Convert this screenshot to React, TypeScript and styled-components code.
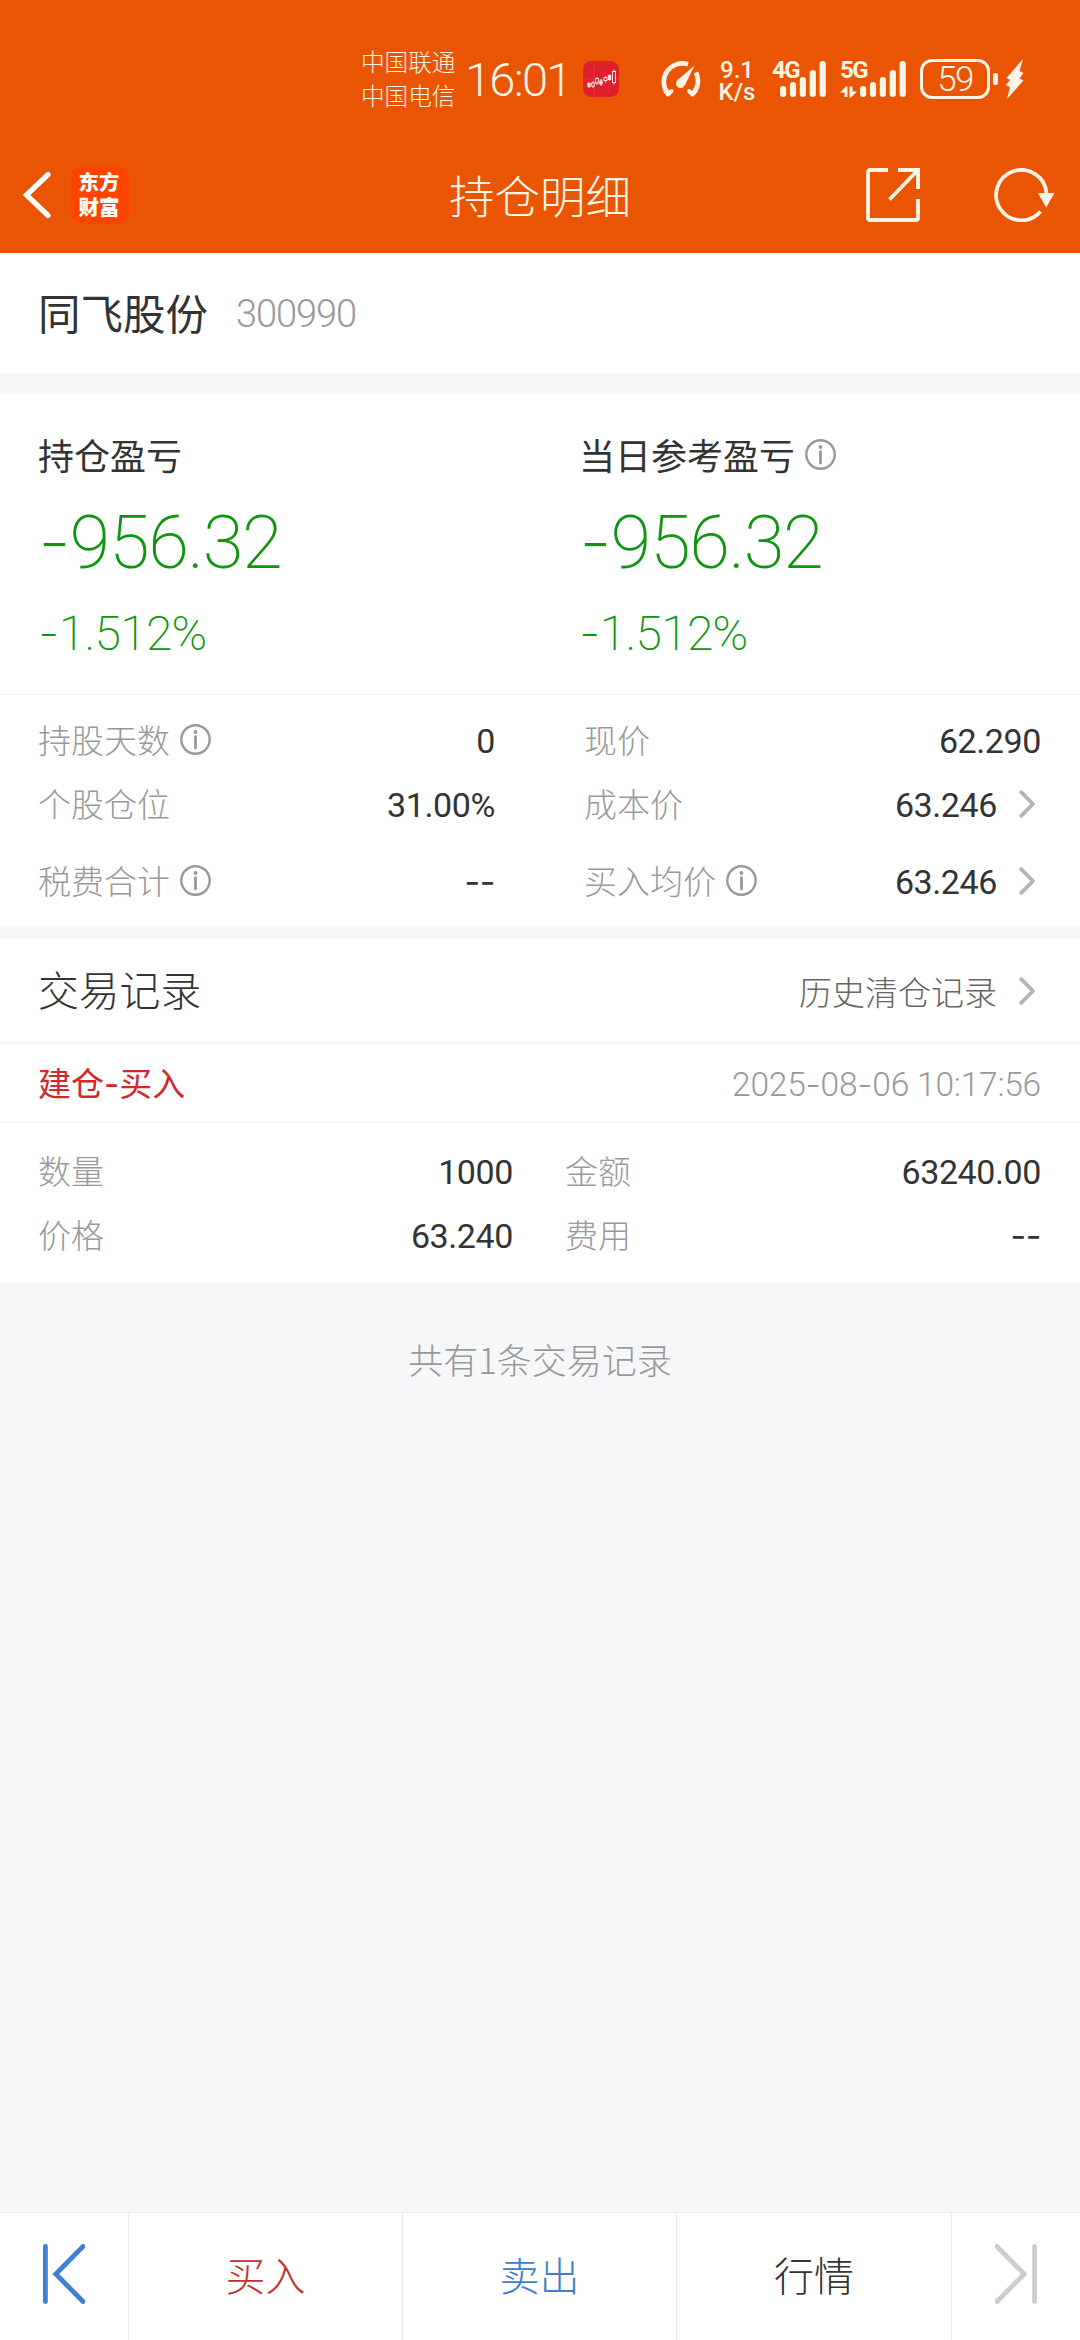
import React from "react";
import styled, { createGlobalStyle } from "styled-components";

const CJK = `"Noto Sans CJK SC", sans-serif`;
const NUM = `Roboto, "Noto Sans CJK SC", sans-serif`;

const GlobalStyle = createGlobalStyle`
  * { box-sizing: border-box; }
  body { margin: 0; background: #f6f7f9; font-family: ${CJK}; }
`;

const Screen = styled.div`
  width: 1080px;
  height: 2340px;
  display: flex;
  flex-direction: column;
  background: #f6f7f9;
  color: #333;
  overflow: hidden;
`;

/* ---------- header ---------- */
const Header = styled.header`
  height: 253px;
  background: #ea5504;
  color: #fff4e6;
`;
const StatusBar = styled.div`
  height: 137px;
  padding: 21px 0 0 361px;
  display: flex;
  align-items: center;
`;
const StatusItem = styled.div<{ $w: number; $gap?: number }>`
  position: relative;
  flex: none;
  width: ${(p) => p.$w}px;
  height: 40px;
  margin-left: ${(p) => p.$gap ?? 0}px;
  display: flex;
  align-items: center;
  svg { display: block; overflow: visible; flex: none; }
`;
const Carriers = styled.div`
  font-size: 23.6px;
  line-height: 34px;
  font-weight: 300;
  white-space: nowrap;
  margin-top: -3px;
`;
const Clock = styled.div`
  font-family: ${NUM};
  font-size: 47px;
  font-weight: 300;
  line-height: 46px;
  letter-spacing: -1.7px;
  margin-left: -2px;
  padding-top: 1px;
  white-space: nowrap;
`;
const Speed = styled.div`
  width: 100%;
  margin-top: 3px;
  font-family: Roboto, sans-serif;
  font-size: 24px;
  font-weight: 500;
  line-height: 22px;
  text-align: center;
`;
const NetLabel = styled.span`
  position: absolute;
  left: 0;
  top: 0;
  font-family: Roboto, sans-serif;
  font-size: 24px;
  font-weight: 700;
  line-height: 22px;
  letter-spacing: -1.5px;
`;
const Battery = styled.div`
  width: 70px;
  height: 40px;
  border: 3px solid #fff4e6;
  border-radius: 12px;
  font-family: ${NUM};
  font-size: 35px;
  font-weight: 300;
  line-height: 35px;
  text-align: center;
  letter-spacing: -1.6px;
`;
const BatteryTip = styled.div`
  width: 5px;
  height: 12px;
  margin-left: 3px;
  border-radius: 2px;
  background: #fff4e6;
`;

const NavBar = styled.nav`
  height: 116px;
  display: grid;
  grid-template-columns: 360px 1fr 360px;
  align-items: center;
`;
const NavLeft = styled.div`
  display: flex;
  align-items: center;
  gap: 20px;
  padding-left: 22px;
  svg { display: block; }
`;
const Logo = styled.div`
  width: 58px;
  height: 58px;
  border-radius: 12px;
  background: #ff4400;
  color: #fff;
  font-family: "Noto Sans CJK SC", sans-serif;
  font-size: 20.5px;
  font-weight: 900;
  line-height: 24.5px;
  padding: 3px 0 0 7.5px;
`;
const NavTitle = styled.h1`
  margin: 0;
  padding-bottom: 3px;
  font-size: 45.5px;
  font-weight: 300;
  line-height: 60px;
  text-align: center;
`;
const NavRight = styled.div`
  display: flex;
  justify-content: flex-end;
  align-items: center;
  gap: 74px;
  padding-right: 25px;
  svg { display: block; }
`;

/* ---------- holdings ---------- */
const StockBar = styled.section`
  height: 120px;
  padding: 0 39px 0 38px;
  display: flex;
  align-items: center;
  background: #fff;
`;
const StockName = styled.span`
  padding-bottom: 3px;
  font-size: 42.5px;
  line-height: 60px;
`;
const StockCode = styled.span`
  margin-left: 28px;
  padding-top: 2px;
  font-family: ${NUM};
  font-size: 38px;
  font-weight: 300;
  letter-spacing: -1.1px;
  color: #999;
`;
const Gap = styled.div<{ $h: number }>`
  height: ${(p) => p.$h}px;
  flex: none;
`;
const Profits = styled.section`
  height: 302px;
  flex: none;
  padding: 36px 39px 0 38px;
  display: grid;
  grid-template-columns: 541px 1fr;
  background: #fff;
  border-bottom: 1px solid #f3f3f3;
`;
const ProfitLabel = styled.div`
  height: 50px;
  display: flex;
  align-items: center;
  gap: 10px;
  font-size: 36px;
  line-height: 50px;
`;
const ProfitValue = styled.div`
  margin-top: 18px;
  font-family: ${NUM};
  font-size: 74px;
  font-weight: 200;
  line-height: 88px;
  letter-spacing: -1.4px;
  color: #0e960e;
`;
const ProfitRate = styled.div`
  margin-top: 18px;
  font-family: ${NUM};
  font-size: 48px;
  font-weight: 200;
  line-height: 56px;
  letter-spacing: -0.7px;
  color: #0e960e;
`;
const Dash = styled.span`
  font-family: Inter, sans-serif;
`;
const Stats = styled.section<{ $left: number; $right: number }>`
  flex: none;
  padding: 13px 39px 0 38px;
  display: grid;
  grid-template-columns: ${(p) => p.$left}px ${(p) => p.$right}px;
  justify-content: space-between;
  align-content: start;
  background: #fff;
`;
const Stat = styled.div<{ $h: number }>`
  height: ${(p) => p.$h}px;
  display: flex;
  align-items: center;
`;
const StatLabel = styled.span`
  display: flex;
  align-items: center;
  gap: 10px;
  padding-bottom: 2px;
  font-size: 33px;
  font-weight: 300;
  line-height: 48px;
  color: #999;
`;
const StatValue = styled.span`
  margin-left: auto;
  padding-top: 2px;
  font-family: ${NUM};
  font-size: 34px;
  line-height: 48px;
  letter-spacing: -0.4px;
  color: #333;
`;
const ArrowBox = styled.span`
  display: flex;
  width: 44px;
  padding: 0 5px 0 22px;
  svg { display: block; }
`;

/* ---------- records ---------- */
const RecordsHead = styled.section`
  height: 106px;
  flex: none;
  padding: 0 39px 0 38px;
  display: flex;
  align-items: center;
  background: #fff;
  border-bottom: 4px solid #f6f8f8;
`;
const RecordsTitle = styled.h2`
  margin: 0 auto 0 0;
  padding-bottom: 3px;
  font-size: 40.8px;
  font-weight: 300;
  line-height: 60px;
`;
const HistoryLink = styled.span`
  display: flex;
  align-items: center;
  padding-top: 2px;
  font-size: 33px;
  font-weight: 300;
  line-height: 48px;
  color: #666;
`;
const RecordHead = styled.div`
  height: 78px;
  flex: none;
  padding: 0 39px 0 38px;
  display: flex;
  align-items: center;
  justify-content: space-between;
  background: #fff;
  border-bottom: 1px solid #f3f3f3;
`;
const RecordKind = styled.span`
  padding-bottom: 2px;
  font-size: 33px;
  line-height: 48px;
  color: #cf2a2a;
`;
const RecordTime = styled.time`
  font-family: ${NUM};
  font-size: 33.5px;
  font-weight: 300;
  letter-spacing: -0.2px;
  color: #999;
`;
const RecordBody = styled(Stats)`
  height: 160px;
  padding-top: 16px;
`;
const Summary = styled.p`
  flex: 1;
  margin: 0;
  padding-top: 50px;
  font-size: 35px;
  font-weight: 300;
  line-height: 52px;
  text-align: center;
  color: #999;
`;

/* ---------- bottom bar ---------- */
const BottomBar = styled.footer`
  height: 128px;
  flex: none;
  display: grid;
  grid-template-columns: 129px 274px 274px 275px 128px;
  background: #fff;
  border-top: 1px solid #ebebeb;
`;
const Tab = styled.button<{ $color?: string }>`
  border: 0;
  border-right: 1px solid #ebebeb;
  background: none;
  padding: 0 0 5px;
  display: flex;
  align-items: center;
  justify-content: center;
  font-family: ${CJK};
  font-size: 40px;
  font-weight: 300;
  line-height: 56px;
  color: ${(p) => p.$color ?? "#333"};
  &:last-child { border-right: 0; }
`;

const INK = "#fff4e6";

const InfoIcon = () => (
  <svg width="31" height="31" viewBox="0 0 31 31" fill="none">
    <circle cx="15.5" cy="15.5" r="14.2" stroke="#999" strokeWidth="2.4" />
    <circle cx="15.5" cy="8" r="1.9" fill="#999" />
    <path d="M15.5 12.6V24" stroke="#999" strokeWidth="2.8" strokeLinecap="round" />
  </svg>
);

const Arrow = () => (
  <ArrowBox>
    <svg width="17" height="28" viewBox="0 0 17 28" fill="none">
      <path d="M2.2 2.2L14 14L2.2 25.8" stroke="#b3b3b3" strokeWidth="3.8" strokeLinecap="round" strokeLinejoin="round" />
    </svg>
  </ArrowBox>
);

const StockAppIcon = () => (
  <svg width="36" height="36" viewBox="0 0 36 36">
    <rect width="36" height="36" rx="8.5" fill="#df1f2b" />
    <path d="M11 0V36M0 18H36" stroke="#e8404a" strokeWidth="0.6" />
    <g stroke="#ffe3e0" strokeWidth="1" fill="none">
      <path d="M6 21v6M10 20v7M14 16v8M18 18v7M22.5 15v7M26.5 13v7M31 8.500v15" />
      <rect x="8.600" y="22" width="2.800" height="3" fill="#df1f2b" />
      <rect x="12.600" y="17.500" width="2.800" height="4.500" fill="#df1f2b" />
      <rect x="21" y="16.500" width="3" height="3" fill="#df1f2b" />
      <rect x="29.500" y="10.500" width="3" height="11" fill="#df1f2b" />
    </g>
    <g fill="#ffe3e0">
      <rect x="4.300" y="22" width="3.400" height="4" />
      <rect x="16.300" y="19.500" width="3.400" height="4" />
      <rect x="24.800" y="14" width="3.400" height="5" />
    </g>
  </svg>
);

const Gauge = () => (
  <svg width="43" height="38" viewBox="0 0 43 38" fill="none">
    <path d="M8.500 33A18.500 18.500 0 0 1 29 4.300" stroke={INK} strokeWidth="4.600" />
    <path d="M37 12.500A18.500 18.500 0 0 1 34.500 33" stroke={INK} strokeWidth="4.600" />
    <path d="M6 30.500L9 34.500L12.500 31M30 31L33.500 34.500L37 30.500" stroke={INK} strokeWidth="4" strokeLinecap="round" strokeLinejoin="round" />
    <path d="M35.500 5.500L26 25L18 20.500Z" fill={INK} />
    <circle cx="21.500" cy="23.500" r="4.500" fill={INK} />
  </svg>
);

const BAR_HEIGHTS = [11, 15, 20, 27, 36];

const SignalBars = ({ x, arrows }: { x: number; arrows?: boolean }) => (
  <svg width={x + 46} height="40" viewBox={`0 0 ${x + 46} 40`} fill={INK}>
    {BAR_HEIGHTS.map((h, i) => (
      <rect key={h} x={x + i * 9.9} y={38 - h} width="6.200" height={h} rx="3" />
    ))}
    {arrows && <path d="M0 33.500L6 27.500H7.500V38H4.500V33.500ZM9.500 27.500H12.500V32.500H17L11 38.500H9.500Z" />}
  </svg>
);

const Bolt = () => (
  <svg width="18" height="40" viewBox="0 0 18 40" fill={INK}>
    <path d="M17 0L0.500 19L4 21L0 26L4 28.500L1 40L17.500 21.500L13.500 19.500L17.500 14L13.500 12Z" />
  </svg>
);

const BackIcon = () => (
  <svg width="29" height="48" viewBox="0 0 29 48" fill="none">
    <path d="M26 3.500L4.500 24L26 44.500" stroke="#fff" strokeWidth="5.200" strokeLinecap="round" strokeLinejoin="miter" />
  </svg>
);

const ShareIcon = () => (
  <svg width="54" height="54" viewBox="0 0 54 54" fill="none" stroke={INK} strokeWidth="3.800">
    <path d="M22 2H4Q2 2 2 4V50Q2 52 4 52H50Q52 52 52 50V31" />
    <path d="M32 2H52V21M51.500 2.500L23.500 31.500" />
  </svg>
);

const RefreshIcon = () => (
  <svg width="61" height="54" viewBox="0 0 61 54" fill="none">
    <path d="M46.500 43.500A25.200 25.200 0 1 1 52.500 25.500" stroke={INK} strokeWidth="3.800" />
    <path d="M44 25H60.500L52.200 39.500Z" fill={INK} />
  </svg>
);

const EdgeIcon = ({ color, flip }: { color: string; flip?: boolean }) => (
  <svg width="42" height="60" viewBox="0 0 42 60" fill="none" transform={flip ? "scale(-1 1)" : undefined}>
    <path d="M2.400 2.500V57.500" stroke={color} strokeWidth="4.800" strokeLinecap="round" />
    <path d="M40 2.500L12.800 30L40 57.500" stroke={color} strokeWidth="4.800" strokeLinecap="round" />
  </svg>
);

/* Sets the hyphens of a figure in a face with a longer dash. */
const Figure = ({ text }: { text: string }) => (
  <>
    {text.split(/(-+)/).map((part, i) => (part.startsWith("-") ? <Dash key={i}>{part}</Dash> : part))}
  </>
);

type StatData = { label: string; value: string; h: number; info?: boolean; arrow?: boolean };

const POSITION: StatData[] = [
  { label: "持股天数", value: "0", h: 64, info: true },
  { label: "现价", value: "62.290", h: 64 },
  { label: "个股仓位", value: "31.00%", h: 64 },
  { label: "成本价", value: "63.246", h: 64, arrow: true },
  { label: "税费合计", value: "--", h: 90, info: true },
  { label: "买入均价", value: "63.246", h: 90, info: true, arrow: true },
];

const RECORD: StatData[] = [
  { label: "数量", value: "1000", h: 64 },
  { label: "金额", value: "63240.00", h: 64 },
  { label: "价格", value: "63.240", h: 64 },
  { label: "费用", value: "--", h: 64 },
];

const StatRow = ({ label, value, h, info, arrow }: StatData) => (
  <Stat $h={h}>
    <StatLabel>
      {label}
      {info && <InfoIcon />}
    </StatLabel>
    <StatValue>
      <Figure text={value} />
    </StatValue>
    {arrow && <Arrow />}
  </Stat>
);

const Profit = ({ label, info }: { label: string; info?: boolean }) => (
  <div>
    <ProfitLabel>
      {label}
      {info && <InfoIcon />}
    </ProfitLabel>
    <ProfitValue>
      <Figure text="-956.32" />
    </ProfitValue>
    <ProfitRate>
      <Figure text="-1.512%" />
    </ProfitRate>
  </div>
);

export default function App() {
  return (
    <>
      <GlobalStyle />
      <Screen>
        <Header>
          <StatusBar>
            <StatusItem $w={96}>
              <Carriers>
                中国联通
                <br />
                中国电信
              </Carriers>
            </StatusItem>
            <StatusItem $w={99} $gap={10}>
              <Clock>16:01</Clock>
            </StatusItem>
            <StatusItem $w={36} $gap={17}>
              <StockAppIcon />
            </StatusItem>
            <StatusItem $w={43} $gap={40}>
              <Gauge />
            </StatusItem>
            <StatusItem $w={40} $gap={15}>
              <Speed>
                9.1
                <br />
                K/s
              </Speed>
            </StatusItem>
            <StatusItem $w={54} $gap={15}>
              <NetLabel>4G</NetLabel>
              <SignalBars x={8} />
            </StatusItem>
            <StatusItem $w={66} $gap={14}>
              <NetLabel>5G</NetLabel>
              <SignalBars x={20} arrows />
            </StatusItem>
            <StatusItem $w={78} $gap={14}>
              <Battery>59</Battery>
              <BatteryTip />
            </StatusItem>
            <StatusItem $w={18} $gap={8}>
              <Bolt />
            </StatusItem>
          </StatusBar>
          <NavBar>
            <NavLeft>
              <BackIcon />
              <Logo>
                东方
                <br />
                财富
              </Logo>
            </NavLeft>
            <NavTitle>持仓明细</NavTitle>
            <NavRight>
              <ShareIcon />
              <RefreshIcon />
            </NavRight>
          </NavBar>
        </Header>

        <StockBar>
          <StockName>同飞股份</StockName>
          <StockCode>300990</StockCode>
        </StockBar>
        <Gap $h={20} />

        <Profits>
          <Profit label="持仓盈亏" />
          <Profit label="当日参考盈亏" info />
        </Profits>
        <Stats $left={457} $right={457}>
          {POSITION.map((s) => (
            <StatRow key={s.label} {...s} />
          ))}
        </Stats>
        <Gap $h={13} />

        <RecordsHead>
          <RecordsTitle>交易记录</RecordsTitle>
          <HistoryLink>
            历史清仓记录
            <Arrow />
          </HistoryLink>
        </RecordsHead>
        <RecordHead>
          <RecordKind>
            <Figure text="建仓-买入" />
          </RecordKind>
          <RecordTime>
            <Figure text="2025-08-06 10:17:56" />
          </RecordTime>
        </RecordHead>
        <RecordBody $left={475} $right={476}>
          {RECORD.map((s) => (
            <StatRow key={s.label} {...s} />
          ))}
        </RecordBody>
        <Summary>共有1条交易记录</Summary>

        <BottomBar>
          <Tab>
            <EdgeIcon color="#3e80d1" />
          </Tab>
          <Tab $color="#c5302e">买入</Tab>
          <Tab $color="#3e80c8">卖出</Tab>
          <Tab>行情</Tab>
          <Tab>
            <EdgeIcon color="#ccc" flip />
          </Tab>
        </BottomBar>
      </Screen>
    </>
  );
}
